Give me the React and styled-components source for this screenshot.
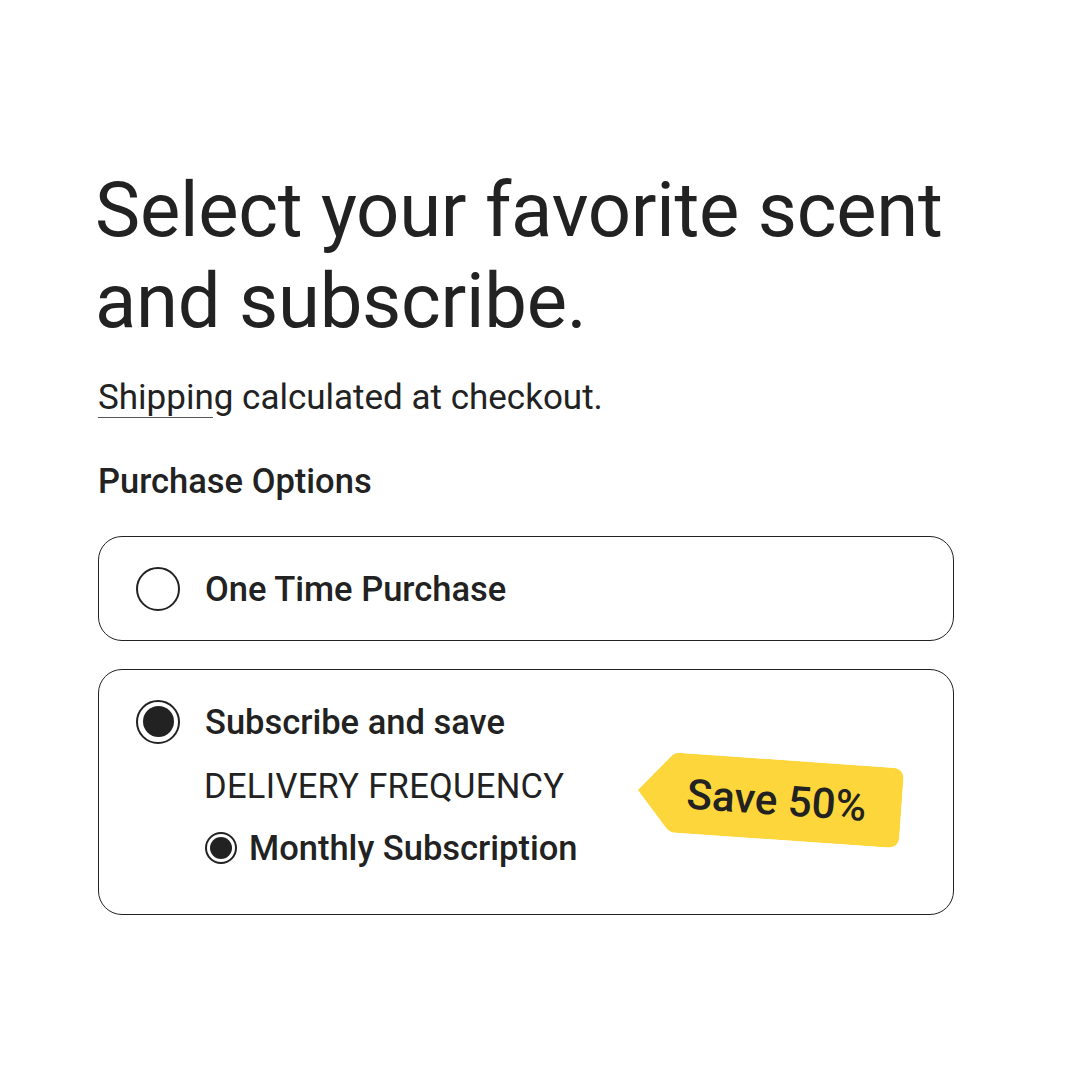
import React, { useState } from 'react';
import styled, { createGlobalStyle } from 'styled-components';

const GlobalStyle = createGlobalStyle`
  html, body {
    margin: 0;
    padding: 0;
    background: #ffffff;
  }
  body {
    font-family: Roboto, "Liberation Sans", sans-serif;
    color: #222222;
  }
`;

const Page = styled.div`
  width: 1080px;
  height: 1080px;
  box-sizing: border-box;
  padding: 165px 126px 0 98px;
`;

const Title = styled.h1`
  margin: 0 0 0 -3px;
  font-size: 76px;
  font-weight: 400;
  line-height: 91px;
  letter-spacing: -0.25px;
  white-space: nowrap;
  color: #222;
`;

const Note = styled.p`
  margin: 31px 0 0;
  font-size: 35px;
  line-height: 40px;
  color: #222;
`;

const Link = styled.a`
  position: relative;
  color: inherit;
  text-decoration: none;

  &::after {
    content: '';
    position: absolute;
    left: 0;
    right: 20px;
    bottom: 0;
    height: 1px;
    background: #555;
  }
`;

const Label = styled.h2`
  margin: 43px 0 0;
  font-size: 34.5px;
  font-weight: 500;
  line-height: 40px;
`;

const Options = styled.div`
  display: flex;
  flex-direction: column;
  gap: 28px;
  margin-top: 35px;
`;

const Card = styled.div`
  position: relative;
  border: 1.5px solid #222;
  border-radius: 24px;
  padding: ${p => (p.$tall ? '29.5px 36px 46px 37px' : '29.5px 36px 29.5px 37px')};
  display: flex;
  flex-direction: column;
  gap: 22px;
  cursor: pointer;
`;

const Row = styled.div`
  display: flex;
  align-items: center;
  gap: ${p => p.$gap || 25}px;
  padding-left: ${p => p.$indent || 0}px;
`;

const Radio = styled.span`
  flex: none;
  box-sizing: border-box;
  width: ${p => p.$size}px;
  height: ${p => p.$size}px;
  border-radius: 50%;
  border: 2px solid #222;
  display: flex;
  align-items: center;
  justify-content: center;

  &::after {
    content: '';
    display: ${p => (p.$on ? 'block' : 'none')};
    width: ${p => p.$inner}px;
    height: ${p => p.$inner}px;
    border-radius: 50%;
    background: #222;
  }
`;

const OptionText = styled.span`
  font-size: 34.5px;
  font-weight: 500;
  line-height: 40px;
`;

const Caps = styled.div`
  font-size: 34.5px;
  font-weight: 400;
  line-height: 40px;
  letter-spacing: 0.3px;
  padding-left: 68px;
`;

const Badge = styled.div`
  position: absolute;
  left: 539px;
  top: 80px;
  width: 264px;
  height: 80px;
  transform: rotate(4deg);
  transform-origin: left center;
  display: flex;
  align-items: center;
  justify-content: center;
  padding-left: 14px;
  box-sizing: border-box;
  font-size: 42px;
  font-weight: 500;
  color: #222;

  svg {
    position: absolute;
    inset: 0;
  }
  span {
    position: relative;
  }
`;

export default function App() {
  const [choice, setChoice] = useState('sub');
  return (
    <>
      <GlobalStyle />
      <Page>
        <Title>
          Select your favorite scent
          <br />
          and subscribe.
        </Title>
        <Note>
          <Link href="#">Shipping</Link> calculated at checkout.
        </Note>
        <Label>Purchase Options</Label>
        <Options>
          <Card onClick={() => setChoice('once')}>
            <Row>
              <Radio $size={44} $inner={31} $on={choice === 'once'} />
              <OptionText>One Time Purchase</OptionText>
            </Row>
          </Card>
          <Card $tall onClick={() => setChoice('sub')}>
            <Row>
              <Radio $size={44} $inner={31} $on={choice === 'sub'} />
              <OptionText>Subscribe and save</OptionText>
            </Row>
            <Caps>DELIVERY FREQUENCY</Caps>
            <Row $indent={69} $gap={12}>
              <Radio $size={32} $inner={22} $on />
              <OptionText>Monthly Subscription</OptionText>
            </Row>
            <Badge>
              <svg width="264" height="80" viewBox="0 0 264 80">
                <path
                  d="M40 0 H252 Q264 0 264 12 V68 Q264 80 252 80 H40 Q34 80 30 75 L0 40 L30 5 Q34 0 40 0 Z"
                  fill="#FDD63B"
                />
              </svg>
              <span>Save 50%</span>
            </Badge>
          </Card>
        </Options>
      </Page>
    </>
  );
}
